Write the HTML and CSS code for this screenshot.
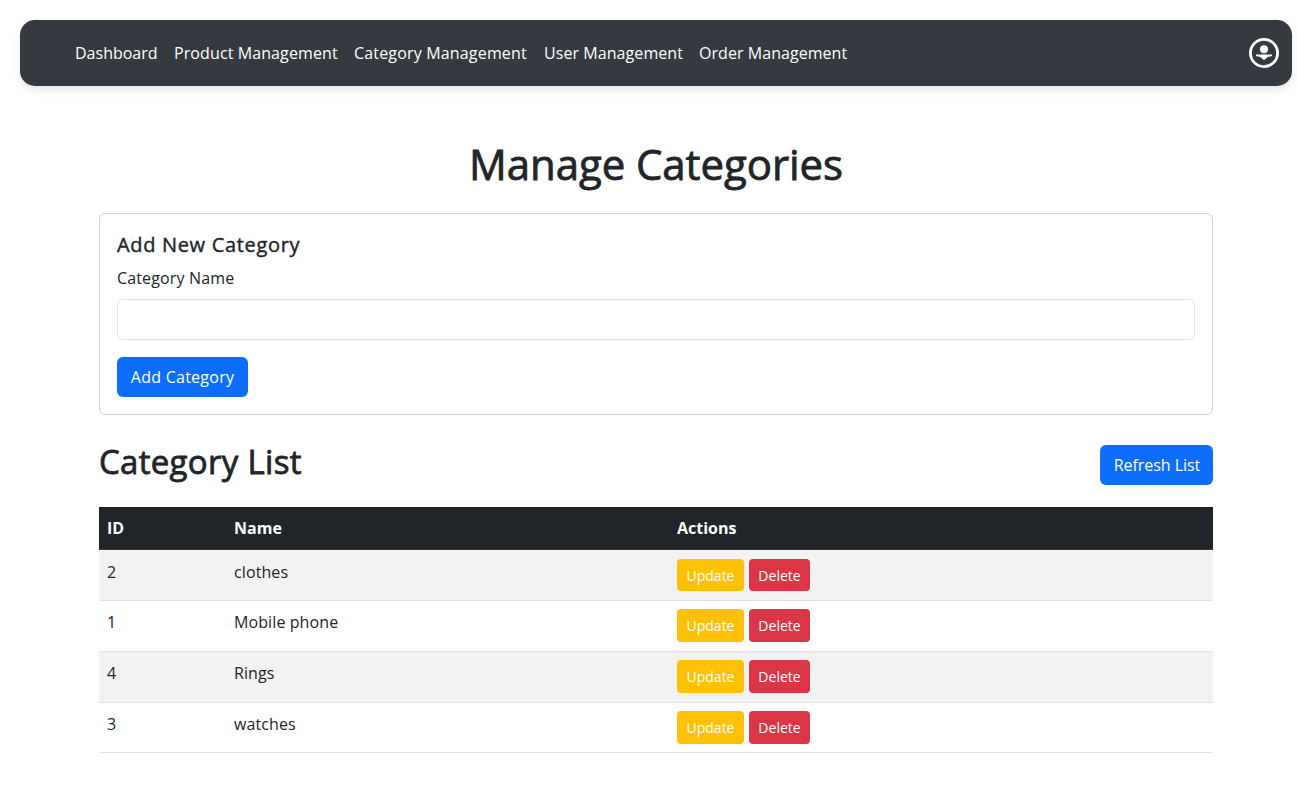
FILE: index.html
```html
<!DOCTYPE html>
<html lang="en">
<head>
<meta charset="utf-8">
<title>Manage Categories</title>
<link rel="stylesheet" href="styles.css">
</head>
<body>
<nav class="navbar">
  <ul class="nav-links">
    <li><a class="nav-link nav-dashboard">Dashboard</a></li>
    <li><a class="nav-link nav-product">Product Management</a></li>
    <li><a class="nav-link nav-category">Category Management</a></li>
    <li><a class="nav-link nav-user">User Management</a></li>
    <li><a class="nav-link nav-order">Order Management</a></li>
  </ul>
  <svg class="profile-icon" viewBox="0 0 30 30" aria-label="Profile">
    <circle cx="15" cy="15" r="13.6" fill="none" stroke="#fff" stroke-width="2.8"/>
    <circle cx="15" cy="11.2" r="4" fill="#fff"/>
    <path d="M7 16.5H23V18L18.8 19L15 22.2L11.2 19L7 18Z" fill="#fff"/>
  </svg>
</nav>
<main class="container">
  <h1 class="page-title">Manage Categories</h1>
  <section class="card">
    <h5 class="card-title">Add New Category</h5>
    <label class="form-label" for="name">Category Name</label>
    <input class="form-control" id="name" type="text">
    <button class="btn btn-primary btn-add">Add Category</button>
  </section>
  <div class="list-header">
    <h2 class="list-title">Category List</h2>
    <button class="btn btn-primary btn-refresh">Refresh List</button>
  </div>
  <table class="table">
    <thead>
      <tr><th class="col-id">ID</th><th class="col-name">Name</th><th>Actions</th></tr>
    </thead>
    <tbody>
      <tr><td>2</td><td>clothes</td><td class="cell-actions"><div class="actions"><button class="btn-sm btn-warning">Update</button><button class="btn-sm btn-danger">Delete</button></div></td></tr>
      <tr><td>1</td><td>Mobile phone</td><td class="cell-actions"><div class="actions"><button class="btn-sm btn-warning">Update</button><button class="btn-sm btn-danger">Delete</button></div></td></tr>
      <tr><td>4</td><td>Rings</td><td class="cell-actions"><div class="actions"><button class="btn-sm btn-warning">Update</button><button class="btn-sm btn-danger">Delete</button></div></td></tr>
      <tr><td>3</td><td>watches</td><td class="cell-actions"><div class="actions"><button class="btn-sm btn-warning">Update</button><button class="btn-sm btn-danger">Delete</button></div></td></tr>
    </tbody>
  </table>
</main>
</body>
</html>
```

FILE: styles.css
```css
* { box-sizing: border-box; }
body {
  margin: 0;
  overflow: hidden;
  background: #fff;
  color: #212529;
  font-family: "Open Sans", "Noto Sans", sans-serif;
  font-size: 16px;
  line-height: 25px;
}
.navbar {
  display: flex;
  align-items: center;
  justify-content: space-between;
  height: 66px;
  margin: 20px 5px 0 20px;
  padding: 0 13px 0 55px;
  background: #343a40;
  border-radius: 15px;
  box-shadow: 0 4px 8px rgba(0, 0, 0, 0.1);
}
.nav-links { display: flex; gap: 17px; margin: 0; padding: 0; list-style: none; }
.nav-link { display: block; color: #fff; white-space: nowrap; }
.nav-dashboard { width: 82px; }
.nav-product { width: 163px; letter-spacing: 0.1px; }
.nav-category { width: 173px; letter-spacing: 0.17px; }
.nav-user { width: 138px; letter-spacing: 0.07px; }
.nav-order { width: 149px; letter-spacing: 0.05px; }
.profile-icon { width: 30px; height: 30px; }
.container { width: 1114px; margin: 53px 0 0 99px; }
h1, h2, h5 { margin: 0; font-weight: 500; -webkit-text-stroke: 0.8px #212529; }
.page-title { margin-bottom: 24px; font-size: 42px; line-height: 50px; text-align: center; letter-spacing: -0.08px; }
.card { height: 202px; padding: 17px 17px; border: 1px solid #cfd0d1; border-radius: 6px; }
.card-title { font-size: 20px; line-height: 28px; margin-bottom: 7px; letter-spacing: 0.67px; -webkit-text-stroke-width: 0.4px; }
.form-label { display: block; line-height: 25px; margin-bottom: 8px; letter-spacing: 0.15px; }
.form-control {
  display: block;
  width: 100%;
  height: 41px;
  margin-bottom: 17px;
  border: 1px solid #dee2e6;
  border-radius: 6px;
  background: #fff;
}
button { padding: 0; border: 0; font-family: inherit; color: #fff; white-space: nowrap; }
.btn { height: 40px; border-radius: 6px; font-size: 16px; }
.btn-primary { background: #0d6efd; }
.btn-add { width: 131px; letter-spacing: 0.25px; }
.btn-refresh { width: 113px; padding-left: 1px; letter-spacing: -0.05px; }
.list-header { display: flex; justify-content: space-between; margin-top: 30px; height: 62px; }
.list-title { font-size: 33px; line-height: 34px; letter-spacing: 0.3px; }
.table { width: 100%; border-collapse: separate; border-spacing: 0; table-layout: fixed; }
th, td { padding: 9px 8px 0; text-align: left; vertical-align: top; }
th { height: 43px; background: #212529; color: #fff; font-weight: 700; border-bottom: 1px solid #373b3e; }
td { height: 51px; border-bottom: 1px solid #dee2e6; letter-spacing: 0.1px; }
td.cell-actions { padding-top: 8px; letter-spacing: 0; }
tbody tr:first-child td { padding-top: 10px; }
tbody tr:first-child td.cell-actions { padding-top: 9px; }
tbody tr:last-child td { height: 50px; }
.col-id { width: 127px; }
.col-name { width: 443px; }
tbody tr:nth-child(odd) td { background: #f2f2f2; }
.actions { display: flex; gap: 5px; }
.btn-sm { height: 33px; border-radius: 4px; font-size: 14px; }
tbody tr:first-child .btn-sm { height: 32px; }
.btn-warning { width: 67px; background: #ffc107; }
.btn-danger { width: 61px; background: #dc3545; }
```
